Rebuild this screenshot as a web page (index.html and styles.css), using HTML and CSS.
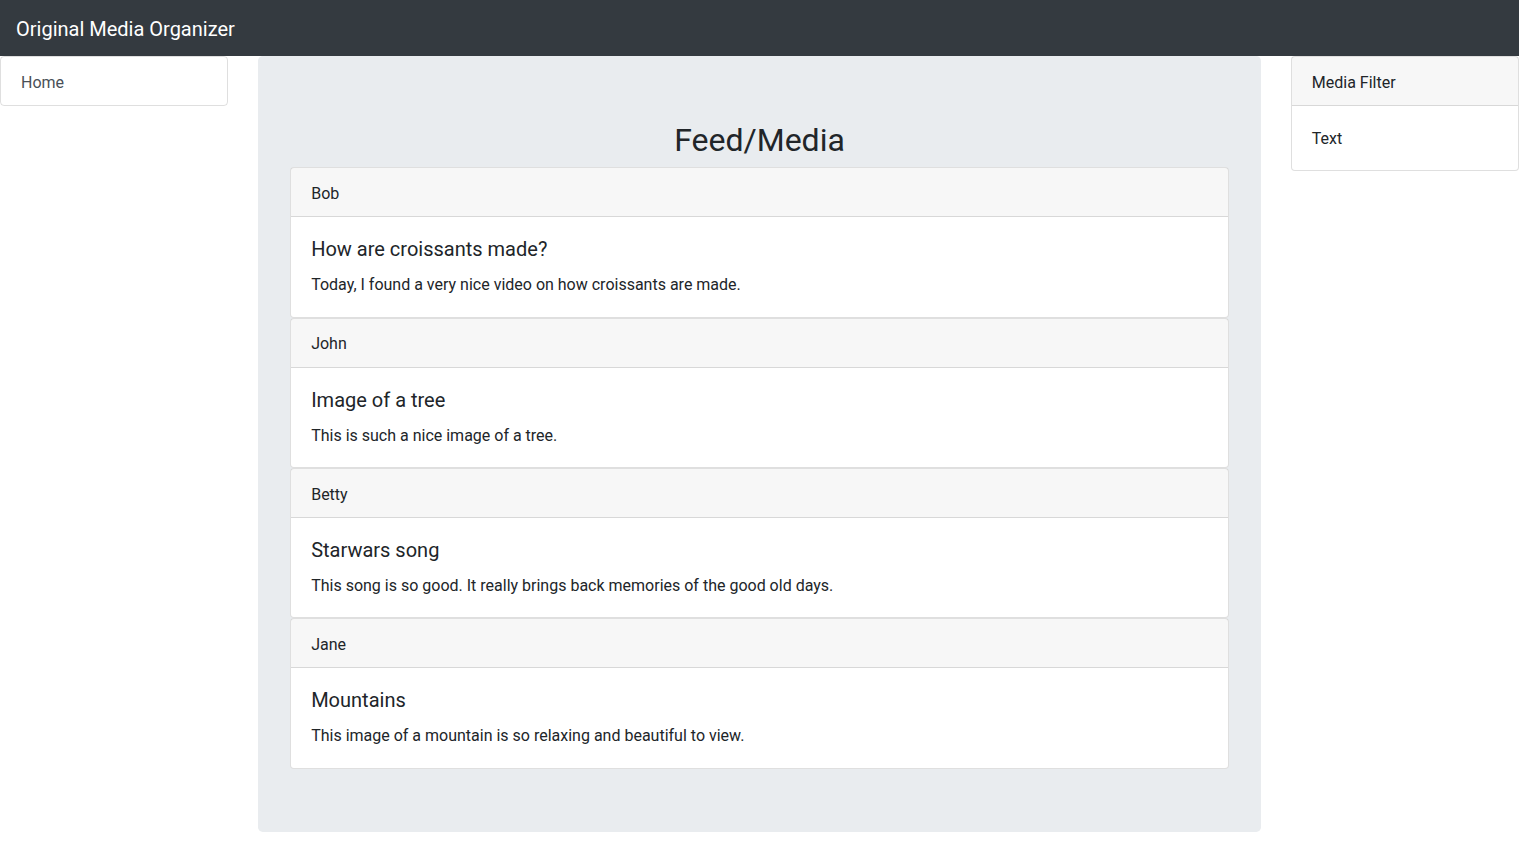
FILE: index.html
```html
<!DOCTYPE html>
<html lang="en">
<head>
<meta charset="utf-8">
<title>Original Media Organizer</title>
<link rel="stylesheet" href="styles.css">
</head>
<body>
<div class="page">
  <nav class="navbar">
    <a class="brand" href="#">Original Media Organizer</a>
  </nav>
  <div class="row">
    <aside class="col-side">
      <div class="list-group">
        <a class="list-item" href="#">Home</a>
      </div>
    </aside>
    <main class="col-main">
      <div class="jumbotron">
        <h2 class="title">Feed/Media</h2>
        <div class="card">
          <div class="card-header">Bob</div>
          <div class="card-body">
            <h5 class="card-title">How are croissants made?</h5>
            <p class="card-text">Today, I found a very nice video on how croissants are made.</p>
          </div>
        </div>
        <div class="card">
          <div class="card-header">John</div>
          <div class="card-body">
            <h5 class="card-title">Image of a tree</h5>
            <p class="card-text">This is such a nice image of a tree.</p>
          </div>
        </div>
        <div class="card">
          <div class="card-header">Betty</div>
          <div class="card-body">
            <h5 class="card-title">Starwars song</h5>
            <p class="card-text">This song is so good. It really brings back memories of the good old days.</p>
          </div>
        </div>
        <div class="card">
          <div class="card-header">Jane</div>
          <div class="card-body">
            <h5 class="card-title">Mountains</h5>
            <p class="card-text">This image of a mountain is so relaxing and beautiful to view.</p>
          </div>
        </div>
      </div>
    </main>
    <aside class="col-side">
      <div class="card">
        <div class="card-header">Media Filter</div>
        <div class="card-body side-body">Text</div>
      </div>
    </aside>
  </div>
</div>
</body>
</html>
```

FILE: styles.css
```css
* { box-sizing: border-box; }
html, body { margin: 0; padding: 0; }
body {
  font-family: Roboto, "Noto Sans", "Liberation Sans", sans-serif;
  font-size: 16px;
  line-height: 1.5;
  color: #212529;
  background: #fff;
}
.page { width: 1519px; }
.navbar {
  background: #343a40;
  height: 56px;
  padding: 9px 16px 7px;
  display: flex;
  align-items: center;
}
.brand {
  color: #fff;
  font-size: 20px;
  line-height: 30px;
  text-decoration: none;
}
.row {
  display: grid;
  grid-template-columns: 228.17px 1002.67px 228.17px;
  column-gap: 30px;
  align-items: start;
}
.list-group {
  border: 1px solid rgba(0,0,0,.125);
  border-radius: 4px;
}
.list-item {
  display: block;
  padding: 14px 20px 10px;
  color: #495057;
  text-decoration: none;
  line-height: 24px;
}
.jumbotron {
  background: #e9ecef;
  border-radius: 4.8px;
  padding: 65px 32px 63px;
  margin-bottom: 32px;
}
.title {
  margin: 0 0 8px;
  font-size: 32px;
  font-weight: 400;
  line-height: 1.2;
  text-align: center;
}
.card {
  background: #fff;
  border: 1px solid rgba(0,0,0,.125);
  border-radius: 4px;
}
.card-header {
  background: rgba(0,0,0,.03);
  border-bottom: 1px solid rgba(0,0,0,.125);
  padding: 13.5px 20px 10.5px;
  line-height: 24px;
}
.card-body {
  padding: 20px 20px 19.33px;
  line-height: 24px;
}
.side-body {
  padding: 21px 20px 19px;
}
.card-title {
  margin: 0 0 12px;
  font-size: 20px;
  font-weight: 400;
  line-height: 24px;
}
.card-text { margin: 0; }
```
